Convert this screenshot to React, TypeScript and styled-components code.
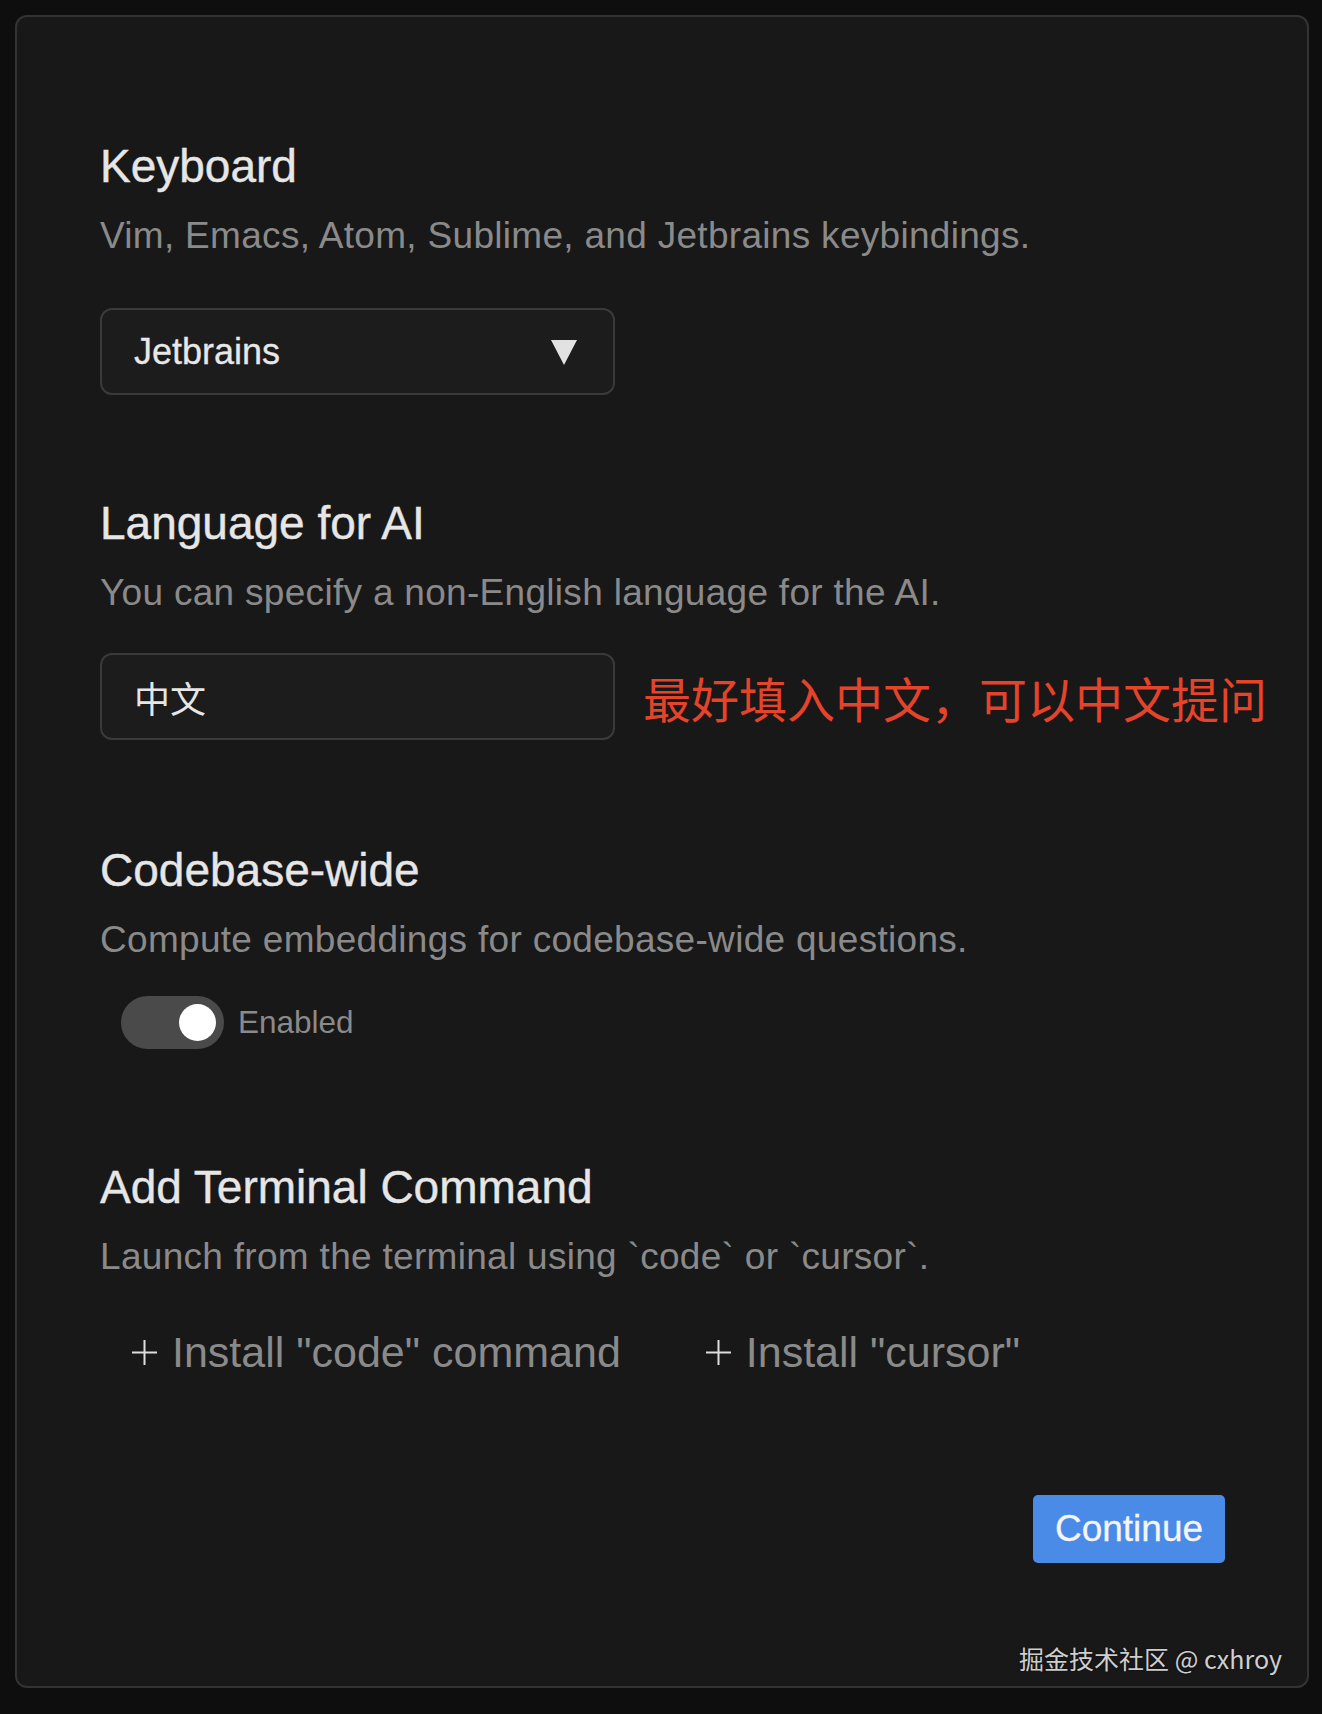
import styled, { createGlobalStyle } from 'styled-components';

const GlobalStyle = createGlobalStyle`
  html, body {
    margin: 0;
    padding: 0;
    background: #0e0e0e;
  }
  body {
    font-family: 'Liberation Sans', Arial, sans-serif;
  }
`;

const Page = styled.div`
  position: relative;
  box-sizing: border-box;
  width: 1322px;
  height: 1714px;
  padding: 15px 0 0 15px;
  background: #0e0e0e;
`;

const Card = styled.div`
  box-sizing: border-box;
  display: flex;
  flex-direction: column;
  width: 1294px;
  height: 1673px;
  padding: 121px 82px 0 83px;
  background: #181818;
  border: 2px solid #333333;
  border-radius: 12px;
`;

const Section = styled.section<{ $top: number }>`
  display: flex;
  flex-direction: column;
  align-items: flex-start;
  margin-top: ${(p) => p.$top}px;
`;

const Title = styled.h2`
  margin: 0;
  font-size: 46px;
  line-height: 56px;
  font-weight: 400;
  color: #e6e6e6;
  -webkit-text-stroke: 0.4px #e6e6e6;
`;

const Hint = styled.p`
  margin: 20px 0 0;
  font-size: 37px;
  line-height: 44px;
  letter-spacing: 0.3px;
  color: #8a8a8a;
`;

const Field = styled.div<{ $top?: number }>`
  box-sizing: border-box;
  display: flex;
  flex-shrink: 0;
  align-items: center;
  justify-content: space-between;
  width: 515px;
  height: 87px;
  margin-top: ${(p) => p.$top ?? 0}px;
  padding: 0 36px 0 32px;
  background: #1c1c1c;
  border: 2px solid #3a3a3a;
  border-radius: 12px;
  font-size: 36px;
  color: #e8e8e8;
  -webkit-text-stroke: 0.3px #e8e8e8;
`;

const CjkValue = styled.span`
  font-family: 'Noto Sans CJK SC', sans-serif;
  font-size: 36px;
  color: #e6e6e6;
  -webkit-text-stroke: 0;
`;

const FieldRow = styled.div<{ $top: number }>`
  display: flex;
  align-items: center;
  gap: 28px;
  margin-top: ${(p) => p.$top}px;
`;

const Note = styled.span`
  flex-shrink: 0;
  white-space: nowrap;
  font-family: 'Noto Sans CJK SC', sans-serif;
  font-size: 48px;
  line-height: 56px;
  color: #e5432a;
`;

const ToggleRow = styled.div<{ $top: number }>`
  display: flex;
  align-items: center;
  gap: 14px;
  margin: ${(p) => p.$top}px 0 0 21px;
`;

const Track = styled.div`
  box-sizing: border-box;
  display: flex;
  align-items: center;
  justify-content: flex-end;
  width: 103px;
  height: 53px;
  padding: 0 8px;
  border-radius: 27px;
  background: #4a4a4a;
`;

const Knob = styled.span`
  width: 37px;
  height: 37px;
  border-radius: 50%;
  background: #ffffff;
`;

const ToggleLabel = styled.span`
  font-size: 31.5px;
  color: #8a8a8a;
`;

const InstallRow = styled.div<{ $top: number }>`
  display: flex;
  gap: 22px;
  margin-top: ${(p) => p.$top}px;
`;

const InstallButton = styled.button`
  display: flex;
  align-items: center;
  gap: 14px;
  padding: 0 31px;
  background: none;
  border: none;
  font-family: inherit;
  font-size: 43px;
  line-height: 52px;
  color: #8a8a8a;
  cursor: pointer;
`;

const Footer = styled.div`
  display: flex;
  justify-content: flex-end;
  margin-top: 117px;
`;

const ContinueButton = styled.button`
  width: 192px;
  height: 68px;
  padding: 0;
  border: none;
  border-radius: 5px;
  background: #4a8be8;
  font-family: inherit;
  font-size: 37px;
  color: #f5f5f5;
  -webkit-text-stroke: 0.3px #f5f5f5;
  cursor: pointer;
`;

const Watermark = styled.div`
  position: absolute;
  top: 1643px;
  right: 40px;
  font-family: 'Noto Sans CJK SC', sans-serif;
  font-size: 25px;
  line-height: 30px;
  color: rgba(235, 235, 235, 0.88);
  text-shadow: 0 0 2px rgba(0, 0, 0, 0.6);
`;

function Caret() {
  return (
    <svg width="26" height="26" viewBox="0 0 26 26">
      <polygon points="0,1 26,1 13,26" fill="#e2e2e2" />
    </svg>
  );
}

function PlusIcon() {
  return (
    <svg width="27" height="27" viewBox="0 0 27 27">
      <path d="M13.5 1v25M1 13.5h25" stroke="#dedede" strokeWidth="2" />
    </svg>
  );
}

function App(): JSX.Element {
  return (
    <Page>
      <GlobalStyle />
      <Card>
        <Section $top={0}>
          <Title>Keyboard</Title>
          <Hint>Vim, Emacs, Atom, Sublime, and Jetbrains keybindings.</Hint>
          <Field $top={50}>
            <span>Jetbrains</span>
            <Caret />
          </Field>
        </Section>

        <Section $top={100}>
          <Title>Language for AI</Title>
          <Hint>You can specify a non-English language for the AI.</Hint>
          <FieldRow $top={38}>
            <Field>
              <CjkValue>中文</CjkValue>
            </Field>
            <Note>最好填入中文，可以中文提问</Note>
          </FieldRow>
        </Section>

        <Section $top={102}>
          <Title>Codebase-wide</Title>
          <Hint>Compute embeddings for codebase-wide questions.</Hint>
          <ToggleRow $top={34}>
            <Track>
              <Knob />
            </Track>
            <ToggleLabel>Enabled</ToggleLabel>
          </ToggleRow>
        </Section>

        <Section $top={110}>
          <Title>Add Terminal Command</Title>
          <Hint>Launch from the terminal using `code` or `cursor`.</Hint>
          <InstallRow $top={47}>
            <InstallButton>
              <PlusIcon />
              Install "code" command
            </InstallButton>
            <InstallButton>
              <PlusIcon />
              Install "cursor"
            </InstallButton>
          </InstallRow>
        </Section>

        <Footer>
          <ContinueButton>Continue</ContinueButton>
        </Footer>
      </Card>
      <Watermark>掘金技术社区 @ cxhroy</Watermark>
    </Page>
  );
}

export default App;
